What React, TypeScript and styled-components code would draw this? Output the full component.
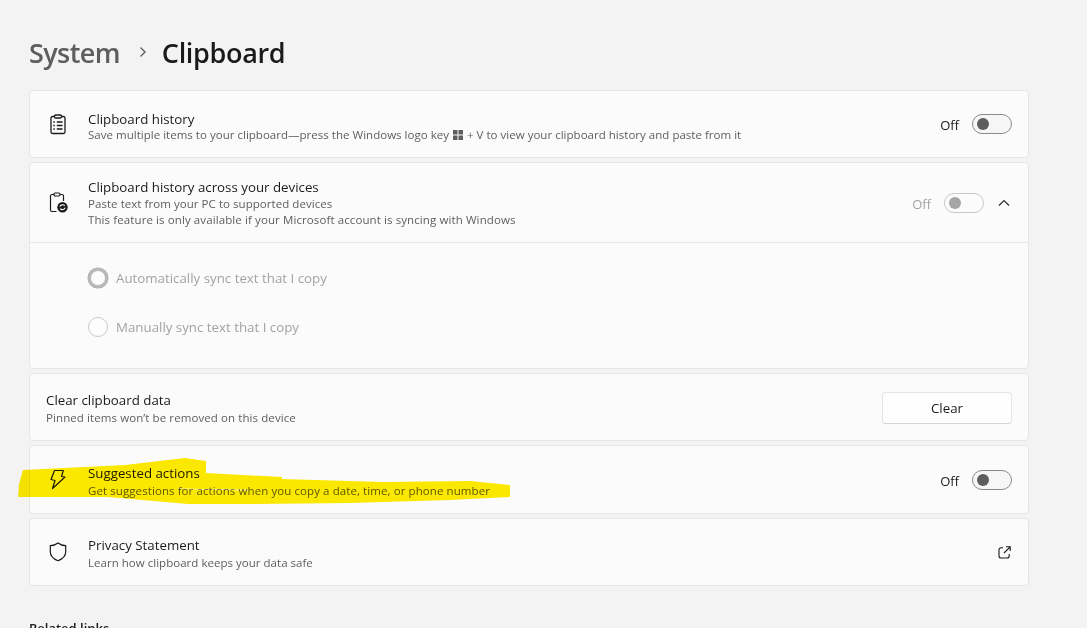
import styled, { createGlobalStyle } from "styled-components";

const GlobalStyle = createGlobalStyle`
  html, body {
    margin: 0;
    height: 100%;
    overflow: hidden;
    background: #f3f3f3;
  }
  * {
    box-sizing: border-box;
  }
`;

const Page = styled.div`
  position: relative;
  width: 1087px;
  height: 628px;
  padding: 32px 58px 0 29px;
  overflow: hidden;
  background: #f3f3f3;
  color: #1b1b1b;
  font-family: "Open Sans", "Noto Sans", sans-serif;
`;

const Breadcrumb = styled.header`
  display: flex;
  align-items: center;
  height: 40px;
  margin-bottom: 18px;
  font-size: 27px;
  font-weight: 600;
`;

const Parent = styled.span`
  color: #5d5d5d;
  letter-spacing: -0.6px;
`;

const Current = styled.span`
  color: #1a1a1a;
  letter-spacing: -0.33px;
`;

const Crumb = styled.svg`
  width: 10px;
  height: 12px;
  margin: 0 14px 0 18px;
`;

const Stack = styled.div`
  display: flex;
  flex-direction: column;
  gap: 4px;
`;

const Card = styled.section`
  background: #fbfbfb;
  border: 1px solid #e6e6e6;
  border-radius: 4px;
`;

const Row = styled.div<{ $height: number; $inset?: boolean }>`
  display: flex;
  align-items: center;
  height: ${(p) => p.$height}px;
  padding: 0 16px 0 ${(p) => (p.$inset ? 16 : 18)}px;
`;

const IconSlot = styled.div`
  flex: none;
  display: flex;
  justify-content: center;
  width: 20px;
  margin-right: 20px;
`;

const Text = styled.div<{ $shift: number }>`
  flex: 1;
  min-width: 0;
  padding-top: ${(p) => p.$shift}px;
`;

const Title = styled.div<{ $gap?: number }>`
  margin-bottom: ${(p) => p.$gap ?? 1}px;
  font-size: 13.3px;
  line-height: 17px;
  color: #1b1b1b;
`;

const Sub = styled.div<{ $track: number }>`
  font-size: 11.5px;
  line-height: 16.5px;
  letter-spacing: ${(p) => p.$track}px;
  color: #5e5e5e;
`;

const WinKey = styled.svg`
  width: 10px;
  height: 10px;
  margin: 0 1px;
  vertical-align: -1px;
`;

const ToggleWrap = styled.div<{ $muted?: boolean }>`
  display: flex;
  align-items: center;
  gap: 13px;
  font-size: 13px;
  color: ${(p) => (p.$muted ? "#a3a3a3" : "#1b1b1b")};
`;

const OffLabel = styled.span`
  padding-top: 2px;
`;

const Track = styled.div<{ $muted?: boolean }>`
  display: flex;
  align-items: center;
  width: 40px;
  height: 20px;
  padding-left: 4px;
  background: ${(p) => (p.$muted ? "#fbfbfb" : "#f6f6f6")};
  border: 1px solid ${(p) => (p.$muted ? "#c8c8c8" : "#8a8a8a")};
  border-radius: 10px;
`;

const Knob = styled.div<{ $muted?: boolean }>`
  width: 12px;
  height: 12px;
  border-radius: 50%;
  background: ${(p) => (p.$muted ? "#a5a5a5" : "#5d5d5d")};
`;

const Chevron = styled.svg`
  width: 12px;
  height: 8px;
  margin-left: 14px;
  margin-right: 2px;
`;

const Options = styled.div`
  display: flex;
  flex-direction: column;
  gap: 29px;
  height: 126px;
  padding: 25px 0 0 58px;
  border-top: 1px solid #e8e8e8;
`;

const Option = styled.label`
  display: flex;
  align-items: center;
  gap: 8px;
  height: 20px;
  font-size: 13.3px;
  color: #a3a3a3;
`;

const Radio = styled.span<{ $checked?: boolean }>`
  flex: none;
  width: 20px;
  height: 20px;
  border-radius: 50%;
  background: #fdfdfd;
  border: ${(p) => (p.$checked ? "3px solid #bababa" : "1px solid #c8c8c8")};
  box-shadow: ${(p) => (p.$checked ? "0 0 0 .5px #aaa" : "none")};
`;

const ClearButton = styled.button`
  width: 130px;
  height: 32px;
  margin-top: 2px;
  background: #fefefe;
  border: 1px solid #e5e5e5;
  border-bottom-color: #d4d4d4;
  border-radius: 4px;
  color: #1b1b1b;
  font-family: inherit;
  font-size: 13.3px;
`;

const Related = styled.h2`
  margin: 33px 0 0;
  font-size: 13px;
  line-height: 18px;
  font-weight: 600;
  color: #1b1b1b;
`;

const Highlighter = styled.svg`
  position: absolute;
  top: 0;
  left: 0;
  width: 1087px;
  height: 628px;
  mix-blend-mode: multiply;
  pointer-events: none;
`;

const ClipboardList = () => (
  <svg width="16" height="21" viewBox="0 0 16 21" fill="none" stroke="#1b1b1b" strokeWidth="1.3">
    <path d="M4.500 2.500H2.500A1.500 1.500 0 0 0 1 4v14a1.500 1.500 0 0 0 1.500 1.500h11A1.500 1.500 0 0 0 15 18V4a1.500 1.500 0 0 0-1.500-1.500h-2" />
    <rect x="4.500" y="1" width="7" height="3" rx="1.200" />
    <path d="M6.800 8h5.700M6.800 11.500h5.700M6.800 15h5.700" />
    <path d="M3.300 8h1.500M3.300 11.500h1.500M3.300 15h1.500" strokeWidth="1.600" />
  </svg>
);

const ClipboardSync = () => (
  <svg width="20" height="21" viewBox="0 0 20 21" fill="none" stroke="#1b1b1b" strokeWidth="1.200">
    <path d="M6 2.500H4A1.500 1.500 0 0 0 2.500 4v14A1.500 1.500 0 0 0 4 19.500h4.500M12 2.500h2A1.500 1.500 0 0 1 15.500 4v5" />
    <rect x="6" y="1" width="6" height="3" rx="1.200" />
    <circle cx="14.500" cy="15.200" r="5.200" fill="#1b1b1b" stroke="none" />
    <path d="M11.800 14.700c.5-2 3.600-2.600 5-.9M17.200 15.700c-.5 2-3.600 2.600-5 .9" stroke="#fbfbfb" strokeWidth="1.100" />
  </svg>
);

const Bolt = () => (
  <svg width="16" height="21" viewBox="0 0 16 21" fill="none" stroke="#1b1b1b" strokeWidth="1.200" strokeLinejoin="round">
    <path d="M4.500 1.500h8.800L11.500 7.500l3.500.5L2.500 19.500 5 11.500 1 10.500z" />
  </svg>
);

const Shield = () => (
  <svg width="18" height="20" viewBox="0 0 18 20" fill="none" stroke="#1b1b1b" strokeWidth="1.200" strokeLinejoin="round">
    <path d="M9 1c2.200 1.800 4.600 2.600 7.700 2.700v6.200c0 4-2.800 6.800-7.700 8.800-4.900-2-7.700-4.800-7.700-8.800V3.700C4.400 3.600 6.800 2.800 9 1z" />
  </svg>
);

const LinkGlyph = styled.svg`
  flex: none;
  width: 13px;
  height: 13px;
  margin-right: 1px;
`;

const ExternalLink = () => (
  <LinkGlyph viewBox="0 0 13 13" fill="none" stroke="#1b1b1b" strokeWidth="1.100">
    <path d="M5 1.800H3a2 2 0 0 0-2 2V10a2 2 0 0 0 2 2h6.200a2 2 0 0 0 2-2V8" />
    <path d="M8 .8h4.200V5M12.200.8 6 7" />
  </LinkGlyph>
);

function Toggle({ muted }: { muted?: boolean }) {
  return (
    <ToggleWrap $muted={muted}>
      <OffLabel>Off</OffLabel>
      <Track $muted={muted}>
        <Knob $muted={muted} />
      </Track>
    </ToggleWrap>
  );
}

export default function App() {
  return (
    <Page>
      <GlobalStyle />
      <Breadcrumb>
        <Parent>System</Parent>
        <Crumb viewBox="0 0 10 12" fill="none" stroke="#5d5d5d" strokeWidth="1.400">
          <path d="M2.500 1.500 7 6l-4.500 4.500" />
        </Crumb>
        <Current>Clipboard</Current>
      </Breadcrumb>

      <Stack>
        <Card>
          <Row $height={66}>
            <IconSlot>
              <ClipboardList />
            </IconSlot>
            <Text $shift={6}>
              <Title $gap={-1}>Clipboard history</Title>
              <Sub $track={0.02}>
                Save multiple items to your clipboard—press the Windows logo key{" "}
                <WinKey viewBox="0 0 10 10" fill="#5e5e5e">
                  <path d="M0 0h4.500v4.500H0zM5.500 0H10v4.500H5.500zM0 5.500h4.500V10H0zM5.500 5.500H10V10H5.500z" />
                </WinKey>{" "}
                + V to view your clipboard history and paste from it
              </Sub>
            </Text>
            <Toggle />
          </Row>
        </Card>

        <Card>
          <Row $height={79}>
            <IconSlot>
              <ClipboardSync />
            </IconSlot>
            <Text $shift={2}>
              <Title $gap={0}>Clipboard history across your devices</Title>
              <Sub $track={0.05}>Paste text from your PC to supported devices</Sub>
              <Sub $track={0.1}>This feature is only available if your Microsoft account is syncing with Windows</Sub>
            </Text>
            <Toggle muted />
            <Chevron viewBox="0 0 12 8" fill="none" stroke="#2b2b2b" strokeWidth="1.200">
              <path d="M1 6.500 6 1.500l5 5" />
            </Chevron>
          </Row>
          <Options>
            <Option>
              <Radio $checked />
              Automatically sync text that I copy
            </Option>
            <Option>
              <Radio />
              Manually sync text that I copy
            </Option>
          </Options>
        </Card>

        <Card>
          <Row $height={66} $inset>
            <Text $shift={5}>
              <Title>Clear clipboard data</Title>
              <Sub $track={0.09}>Pinned items won’t be removed on this device</Sub>
            </Text>
            <ClearButton>Clear</ClearButton>
          </Row>
        </Card>

        <Card>
          <Row $height={67}>
            <IconSlot>
              <Bolt />
            </IconSlot>
            <Text $shift={6}>
              <Title>Suggested actions</Title>
              <Sub $track={0.085}>Get suggestions for actions when you copy a date, time, or phone number</Sub>
            </Text>
            <Toggle />
          </Row>
        </Card>

        <Card>
          <Row $height={66}>
            <IconSlot>
              <Shield />
            </IconSlot>
            <Text $shift={4}>
              <Title>Privacy Statement</Title>
              <Sub $track={0.025}>Learn how clipboard keeps your data safe</Sub>
            </Text>
            <ExternalLink />
          </Row>
        </Card>
      </Stack>

      <Related>Related links</Related>

      <Highlighter viewBox="0 0 1087 628">
        <path
          fill="#ffec00"
          fillRule="evenodd"
          d="M18 497 19 484 23 470 125 465 185 458 206 461 206 473 282 477 282 479 383 482 470 481 510 485 510 497 450 500 350 503 250 504 188 504 108 497zM178 488.400 248 489.800 248 490.500 178 489.100z"
        />
      </Highlighter>
    </Page>
  );
}
